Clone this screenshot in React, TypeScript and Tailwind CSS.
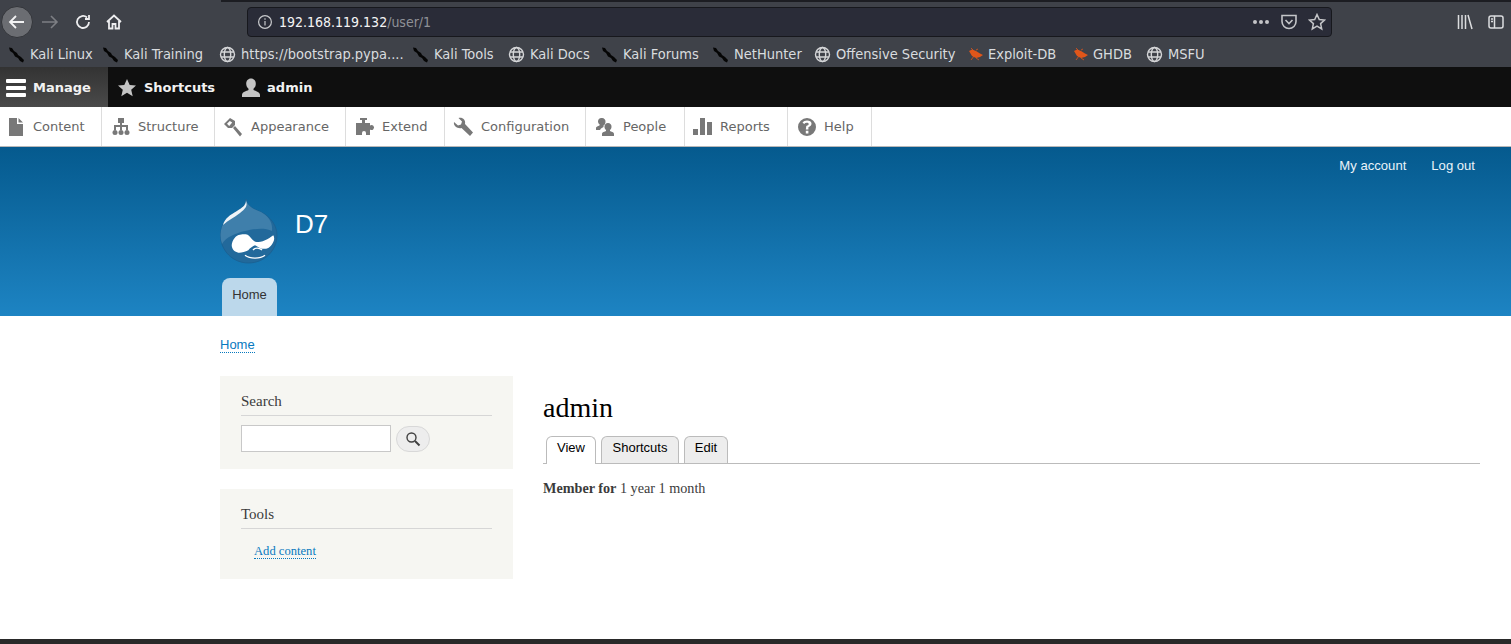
import { ReactNode } from "react";

const sans = "font-['DejaVu_Sans',sans-serif]";

function Kali() {
  return (
    <svg width="17" height="16" viewBox="0 0 17 16" className="shrink-0">
      <path d="M1 0.500 L4 1 L6 4 L9 6 L10 8 L13 10 L16 13 L15 15.500 L12 14 L10 11 L7 9.500 L5 6 L2 4 Z" fill="#050505" />
    </svg>
  );
}

function Globe() {
  return (
    <svg width="17" height="17" viewBox="0 0 17 17" fill="none" stroke="#d5d6d8" strokeWidth="1.400" className="shrink-0">
      <circle cx="8.500" cy="8.500" r="7" />
      <ellipse cx="8.500" cy="8.500" rx="3.200" ry="7" />
      <path d="M2 6h13M2 11h13" />
    </svg>
  );
}

function Bug() {
  return (
    <svg width="15" height="13" viewBox="0 0 15 13" className="shrink-0">
      <path d="M1 3 L4 1.500 L8 3 L12 5.500 L15 7 L12 9 L8 10 L4 8 Z" fill="#e0561a" />
      <path d="M3 0 L6 3 M3 12 L6 8 M8 2 L10 1 M8 10 L11 12" stroke="#e0561a" strokeWidth="0.800" />
    </svg>
  );
}

function Bookmark({ icon, label, w }: { icon: ReactNode; label: string; w: string }) {
  return (
    <div className={`flex items-center gap-[5px] shrink-0 ${w}`}>
      {icon}
      <span className="text-[14.500px] font-stretch-condensed text-[#d9dcdf] whitespace-nowrap">{label}</span>
    </div>
  );
}

const trayIcons: Record<string, ReactNode> = {
  Content: <path d="M3 1h8v6h6v12H3z M12.500 1l4.500 4.500h-4.500z" />,
  Structure: (
    <>
      <path d="M9 3h2v5h6v5h-2v-3h-4v3H9v-3H5v3H3V8h6z" />
      <rect x="7" y="1" width="6" height="5" />
      <circle cx="4" cy="15.500" r="2.500" />
      <circle cx="10" cy="15.500" r="2.500" />
      <circle cx="16" cy="15.500" r="2.500" />
    </>
  ),
  Appearance: <path d="M1 7l6-6 5 3 0 4-3 3-4 0z M4 6.800l2.800-2.800 2.400 1.400-3 3.600z M10 11l2-2 7 8-2 2.500z" fillRule="evenodd" />,
  Extend: <path d="M5 1h7v2H10v3h5v2.500a2.500 2.500 0 1 1 0 4V18H11v-2a2 2 0 0 0-4 0v2H1V6h6V3H5z" />,
  Configuration: <path d="M1 5l4 3.500 3-1 1-3L5.500 1c4-1 7.500 2 6.500 6l8 8.500-3 3.500-8.500-8C5 12 0 9 1 5z" />,
  People: (
    <>
      <path d="M7 1a3.500 3.500 0 0 1 3.500 4c0 1.500-1 3-2 3.500v1.500L6 11.500 5 13H1v-2c0-1.500 3-2 4-3-1-.8-2-2-2-3.500A3.700 3.700 0 0 1 7 1z" />
      <path d="M13 6a3.500 3.500 0 0 1 3.500 4c0 1.500-1 2.500-1.500 3v1c1 .7 4 1 4 3v2H7v-2c0-2 3-2.300 4-3v-1c-.5-.5-1.500-1.500-1.500-3A3.500 3.500 0 0 1 13 6z" />
    </>
  ),
  Reports: <path d="M0 12h5v6H0z M7 1h5v17H7z M14 5h5v13h-5z" />,
  Help: <path d="M10 1a9 9 0 1 0 0 18 9 9 0 0 0 0-18z M8.800 12.500h2.600V10.200c2-.7 3.100-2 3.100-3.700C14.500 4.500 12.500 3.500 10 3.500c-2 0-3.500.8-4.500 2l1.700 1.500c.7-.8 1.500-1.200 2.500-1.200 1.200 0 2 .4 2 1.200 0 1-1 1.500-2.400 2z M8.800 13.800h2.600v2.700H8.800z" fillRule="evenodd" />,
};

const tray = [
  { label: "Content", w: "w-[102px]", pad: "pl-[6px] gap-[7px]" },
  { label: "Structure", w: "w-[113px]", pad: "pl-[9px] gap-[7px]" },
  { label: "Appearance", w: "w-[131px]", pad: "pl-[8px] gap-[8px]" },
  { label: "Extend", w: "w-[99px]", pad: "pl-[9px] gap-[7px]" },
  { label: "Configuration", w: "w-[141px]", pad: "pl-[8px] gap-[8px]" },
  { label: "People", w: "w-[99px]", pad: "pl-[9px] gap-[8px]" },
  { label: "Reports", w: "w-[103px]", pad: "pl-[8px] gap-[7px]" },
  { label: "Help", w: "w-[84px]", pad: "pl-[9px] gap-[7px]" },
];

function DrupalLogo() {
  const drop = "M26 1C27 8 33 11 41 14C51 19 57 28 57 37C57 53 44 65 28.500 65C13 65 .5 53 .5 37C.5 24 10 17 17 13C22 10 26 7 26 1Z";
  return (
    <svg width="58" height="66" viewBox="0 0 58 66">
      <path d={drop} fill="#22699b" stroke="#1b5f91" strokeWidth="0.800" />
      <path d="M26 1C27 8 33 11 41 14C48 18 53 24 52 33C44 29 33 31 25 33C16 35 6 39 2 46C1 43 .5 40 .5 37C.5 24 10 17 17 13C22 10 26 7 26 1Z" fill="#3f7fab" />
      <path d="M26 3C26 7 22 10 17 13C10 17 5 20 3 27C8 22 14 20 20 15C25 11 28 8 26 3Z" fill="#eef4f8" />
      <path d="M11.700 47.300C12 42 16 37 20 36.700C24 36 27 36 28.300 37.300C31 39 33 44 36.700 44C39 44 42 44 45 42.300C48 41 51 39 53.300 37.300C54.500 39 54.500 42 53.300 44C52 47 50 49 48.300 50C46 51 44 51 41.700 50.700C39 50 37 48 35 47.300C33 48 30 50 28.300 52.300C25 54 21 55 18.300 54.700C15 54 12 52 11.700 47.300Z" fill="#fff" />
      <path d="M33 52C35 49.500 39 49.500 42 52M25 57.300C30 61 40 61 45 57.300" stroke="#fff" strokeWidth="1.400" fill="none" />
    </svg>
  );
}

export default function App() {
  return (
    <div className="min-h-[644px] flex flex-col bg-white overflow-hidden">
      <div className={`bg-[#3f4249] h-[67px] flex flex-col ${sans}`}>
        <div className="h-[2px] ml-[221px] bg-[#1c1d22] shrink-0" />
        <div className="h-[40px] flex items-center shrink-0">
          <div className="ml-[1px] w-[32px] h-[32px] rounded-full bg-[#6b6d72] border border-[#33353a] flex items-center justify-center">
            <svg width="18" height="18" viewBox="0 0 18 18" fill="none" stroke="#f2f2f3" strokeWidth="1.800">
              <path d="M16 9H2M8 3L2 9l6 6" />
            </svg>
          </div>
          <svg width="18" height="18" viewBox="0 0 18 18" fill="none" stroke="#7d7f84" strokeWidth="1.600" className="ml-[8px]">
            <path d="M1 9h15M10 3l6 6-6 6" />
          </svg>
          <svg width="18" height="18" viewBox="0 0 18 18" fill="none" stroke="#eeeef0" strokeWidth="1.800" className="ml-[15px]">
            <path d="M15 9a6 6 0 1 1-2-4.500M15 2v4h-4" />
          </svg>
          <svg width="18" height="18" viewBox="0 0 18 18" fill="none" stroke="#eeeef0" strokeWidth="1.800" className="ml-[13px]">
            <path d="M2 9l7-6.500L16 9M4 8v7.500h3.500V11h3v4.500H14V8" />
          </svg>
          <div className="ml-[124px] w-[1085px] h-[30px] rounded-[4px] bg-[#2a2c38] border border-[#17181d] flex items-center pl-[9px] pr-[5px]">
            <svg width="16" height="16" viewBox="0 0 16 16" fill="none" stroke="#c8c9cc" strokeWidth="1.200">
              <circle cx="8" cy="8" r="6.400" />
              <path d="M8 7v4.500M8 4.300v1.400" />
            </svg>
            <span className="ml-[6px] text-[14px] font-stretch-condensed text-[#f4f4f5]">
              192.168.119.132<span className="text-[#8f9197]">/user/1</span>
            </span>
            <div className="ml-auto flex items-center">
              <div className="flex gap-[2px]">
                <div className="w-[4px] h-[4px] rounded-full bg-[#c4c5c8]" />
                <div className="w-[4px] h-[4px] rounded-full bg-[#c4c5c8]" />
                <div className="w-[4px] h-[4px] rounded-full bg-[#c4c5c8]" />
              </div>
              <svg width="18" height="18" viewBox="0 0 18 18" fill="none" stroke="#c4c5c8" strokeWidth="1.600" className="ml-[11px]">
                <path d="M2 2.500h14v6a7 7 0 0 1-14 0z" />
                <path d="M5.500 7L9 10.500 12.500 7" />
              </svg>
              <svg width="18" height="18" viewBox="0 0 18 18" fill="none" stroke="#c4c5c8" strokeWidth="1.500" className="ml-[10px]">
                <path d="M9 1.500l2.300 5 5.200.6-3.900 3.500 1.100 5.300L9 13.200l-4.700 2.700 1.100-5.300L1.500 7.100l5.200-.6z" />
              </svg>
            </div>
          </div>
          <svg width="16" height="16" viewBox="0 0 16 16" fill="none" stroke="#dcdddf" strokeWidth="1.500" className="ml-[125px]">
            <path d="M1.500 1v14M5 1v14M8.500 1v14M11 1l4 14" />
          </svg>
          <svg width="16" height="14" viewBox="0 0 16 14" fill="none" stroke="#dcdddf" strokeWidth="1.500" className="ml-[15px]">
            <rect x="1" y="1" width="14" height="12" rx="2" />
            <path d="M6.500 1v12M3 4h2M3 6.500h2" />
          </svg>
        </div>
        <div className="flex-1 flex items-center pl-[8px]">
          <Bookmark w="w-[94px]" icon={<Kali />} label="Kali Linux" />
          <Bookmark w="w-[117px]" icon={<Kali />} label="Kali Training" />
          <Bookmark w="w-[193px]" icon={<Globe />} label="https://bootstrap.pypa...." />
          <Bookmark w="w-[96px]" icon={<Kali />} label="Kali Tools" />
          <Bookmark w="w-[93px]" icon={<Globe />} label="Kali Docs" />
          <Bookmark w="w-[111px]" icon={<Kali />} label="Kali Forums" />
          <Bookmark w="w-[102px]" icon={<Kali />} label="NetHunter" />
          <Bookmark w="w-[154px]" icon={<Globe />} label="Offensive Security" />
          <Bookmark w="w-[105px]" icon={<Bug />} label="Exploit-DB" />
          <Bookmark w="w-[73px]" icon={<Bug />} label="GHDB" />
          <Bookmark w="w-[70px]" icon={<Globe />} label="MSFU" />
        </div>
      </div>

      <div className={`h-[40px] bg-[#0f0f0f] flex items-stretch text-[13px] font-bold text-[#f2f2f2] ${sans}`}>
        <div className="w-[108px] bg-gradient-to-b from-[#333333] to-[#4a4a4a] flex items-center pl-[6px] gap-[7px] pt-px">
          <div className="flex flex-col gap-[3px]">
            <div className="w-[20px] h-[4px] rounded-[1px] bg-white" />
            <div className="w-[20px] h-[4px] rounded-[1px] bg-white" />
            <div className="w-[20px] h-[4px] rounded-[1px] bg-white" />
          </div>
          <span>Manage</span>
        </div>
        <div className="flex items-center ml-[9px] pt-px">
          <svg width="20" height="20" viewBox="0 0 20 20" fill="#c4c4c4">
            <path d="M10 1l2.700 6 6.300.6-4.800 4.200 1.500 6.400L10 14.800 4.300 18.200l1.500-6.400L1 7.600 7.300 7z" />
          </svg>
          <span className="ml-[7px]">Shortcuts</span>
        </div>
        <div className="flex items-center ml-[26px] pt-px">
          <svg width="20" height="20" viewBox="0 0 20 20" fill="#c4c4c4">
            <path d="M10 0.500c3 0 4.800 2.300 4.800 5.300 0 2.300-1 4-2.300 5v1.200c2 1 6.500 2 6.500 5v2H1v-2c0-3 4.500-4 6.500-5v-1.200c-1.300-1-2.300-2.700-2.300-5C5.200 2.800 7 .5 10 .5z" />
          </svg>
          <span className="ml-[6px]">admin</span>
        </div>
      </div>

      <div className={`h-[40px] bg-white border-b border-[#b8b8b8] flex items-stretch text-[13px] text-[#666] ${sans}`}>
        {tray.map((t) => (
          <div key={t.label} className={`${t.w} ${t.pad} border-r border-[#dddddd] flex items-center pt-px`}>
            <svg width="20" height="20" viewBox="0 0 20 20" fill="#787878" className="shrink-0">
              {trayIcons[t.label]}
            </svg>
            <span>{t.label}</span>
          </div>
        ))}
      </div>

      <div className="h-[169px] bg-gradient-to-b from-[#055a8e] to-[#1d84c3] flex flex-col font-['Liberation_Sans',sans-serif]">
        <div className="flex justify-end gap-[25px] pr-[36px] pt-[11px] text-[13.100px] leading-[15px] text-[#eaf3f9]">
          <span>My account</span>
          <span>Log out</span>
        </div>
        <div className="flex items-start pl-[220px] mt-[25px]">
          <DrupalLogo />
          <span className="ml-[17px] mt-[11px] text-[26px] leading-[30px] text-white">D7</span>
        </div>
        <div className="ml-[222px] mt-auto w-[55px] h-[38px] rounded-t-[8px] bg-[#bcd8eb] text-center pt-[9px] text-[13px] leading-[16px] text-[#333]">
          Home
        </div>
      </div>

      <div className="flex-1 pl-[220px] pr-[31px] font-['Liberation_Serif',serif]">
        <div className="pt-[21px] h-[60px] font-['Liberation_Sans',sans-serif] text-[13px] leading-[15px]">
          <span className="text-[#0779bf] border-b border-dotted border-[#0779bf] inline-block">Home</span>
        </div>
        <div className="flex">
          <div className="w-[293px] shrink-0">
            <div className="h-[93px] bg-[#f6f6f2] px-[21px] pt-[16px]">
              <div className="text-[15px] leading-[18px] text-[#3b3b3b] pb-[5px] border-b border-[#d6d6d6]">Search</div>
              <div className="flex items-center mt-[9px]">
                <div className="w-[150px] h-[27px] bg-white border border-[#c8c8c8]" />
                <div className="ml-[5px] w-[34px] h-[26px] rounded-[13px] bg-[#ededed] border border-[#d8d8d8] flex items-center justify-center">
                  <svg width="16" height="16" viewBox="0 0 16 16" fill="none" stroke="#404040">
                    <circle cx="6.500" cy="6.500" r="4.500" strokeWidth="1.400" />
                    <path d="M10 10l4.500 4.500" strokeWidth="2" />
                  </svg>
                </div>
              </div>
            </div>
            <div className="h-[90px] mt-[20px] bg-[#f6f6f2] px-[21px] pt-[16px]">
              <div className="text-[15px] leading-[18px] text-[#3b3b3b] pb-[5px] border-b border-[#d6d6d6]">Tools</div>
              <div className="mt-[15px] ml-[13px] text-[12.600px] leading-[14px]">
                <span className="text-[#0779bf] border-b border-dotted border-[#0779bf] inline-block">Add content</span>
              </div>
            </div>
          </div>
          <div className="flex-1 ml-[30px]">
            <h1 className="text-[28px] leading-[30px] text-black mt-[17px]">admin</h1>
            <div className="mt-[13px] h-[28px] flex items-end gap-[5px] pl-[3px] border-b border-[#bbbbbb] font-['Liberation_Sans',sans-serif] text-[13px]">
              <div className="h-[28px] w-[50px] -mb-px bg-white border border-b-0 border-[#bbbbbb] rounded-t-[6px] text-center pt-[3px] leading-[16px] text-black">View</div>
              <div className="h-[27px] w-[78px] bg-[#ededed] border border-b-0 border-[#bbbbbb] rounded-t-[6px] text-center pt-[3px] leading-[16px] text-black">Shortcuts</div>
              <div className="h-[27px] w-[44px] bg-[#ededed] border border-b-0 border-[#bbbbbb] rounded-t-[6px] text-center pt-[3px] leading-[16px] text-black">Edit</div>
            </div>
            <div className="mt-[16px] text-[14.200px] leading-[16px] text-[#3b3b3b]">
              <span className="font-bold">Member for</span> 1 year 1 month
            </div>
          </div>
        </div>
      </div>
      <div className="h-[5px] bg-[#292929]" />
    </div>
  );
}
